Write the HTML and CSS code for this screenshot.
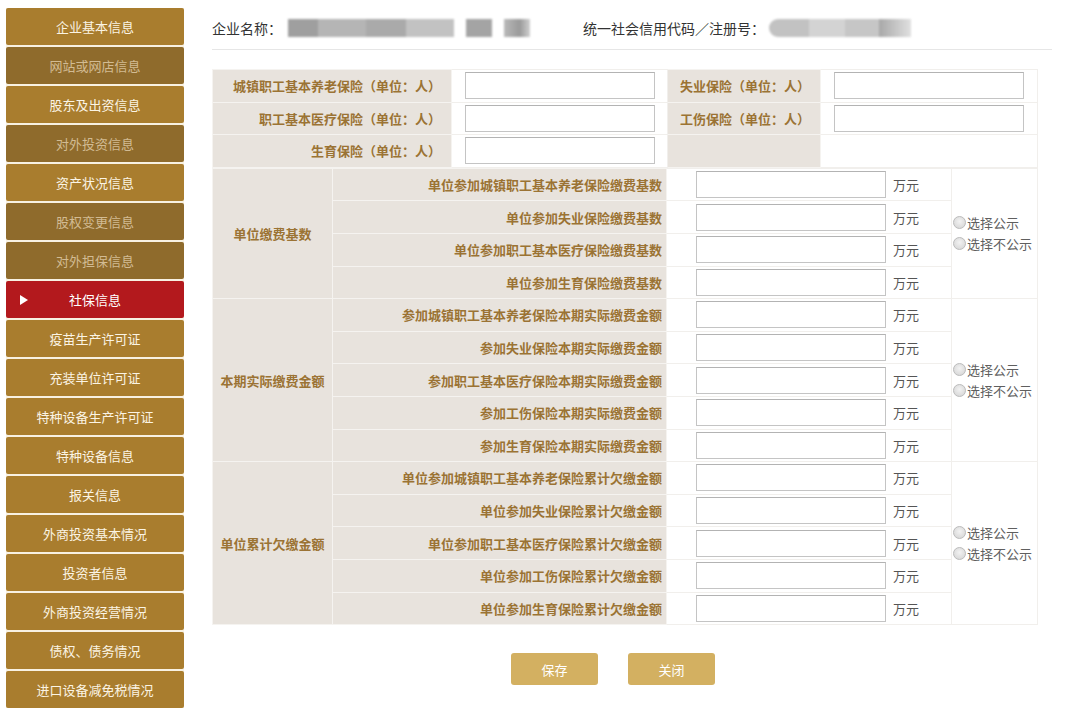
FILE: index.html
```html
<!DOCTYPE html>
<html lang="zh-CN">
<head>
<meta charset="utf-8">
<title>社保信息</title>
<link rel="stylesheet" href="styles.css">
</head>
<body>
<div class="page">
  <nav class="side">
    <a class="nav-item">企业基本信息</a>
    <a class="nav-item dim">网站或网店信息</a>
    <a class="nav-item">股东及出资信息</a>
    <a class="nav-item dim">对外投资信息</a>
    <a class="nav-item">资产状况信息</a>
    <a class="nav-item dim">股权变更信息</a>
    <a class="nav-item dim">对外担保信息</a>
    <a class="nav-item active"><span class="arrow"></span>社保信息</a>
    <a class="nav-item">疫苗生产许可证</a>
    <a class="nav-item">充装单位许可证</a>
    <a class="nav-item">特种设备生产许可证</a>
    <a class="nav-item">特种设备信息</a>
    <a class="nav-item">报关信息</a>
    <a class="nav-item">外商投资基本情况</a>
    <a class="nav-item">投资者信息</a>
    <a class="nav-item">外商投资经营情况</a>
    <a class="nav-item">债权、债务情况</a>
    <a class="nav-item">进口设备减免税情况</a>
  </nav>

  <main class="main">
    <header class="head">
      <span class="head-label">企业名称：</span>
      <span class="blur blur-name">
        <i class="b1"></i><i class="b2"></i><i class="b3"></i><i class="b4"></i><i class="b5"></i><i class="b6"></i><i class="b7"></i><i class="b8"></i>
      </span>
      <span class="head-label code-label">统一社会信用代码／注册号：</span>
      <span class="blur blur-code">
        <i class="c1"></i><i class="c2"></i><i class="c3"></i><i class="c4"></i>
      </span>
    </header>

    <table class="grid top">
      <colgroup><col class="t1"><col class="t2"><col class="t3"><col class="t4"></colgroup>
      <tr>
        <th>城镇职工基本养老保险（单位：人）</th>
        <td class="in"><input type="text"></td>
        <th>失业保险（单位：人）</th>
        <td class="in"><input type="text"></td>
      </tr>
      <tr>
        <th>职工基本医疗保险（单位：人）</th>
        <td class="in"><input type="text"></td>
        <th>工伤保险（单位：人）</th>
        <td class="in"><input type="text"></td>
      </tr>
      <tr>
        <th>生育保险（单位：人）</th>
        <td class="in"><input type="text"></td>
        <th></th>
        <td></td>
      </tr>
    </table>

    <table class="grid bottom">
      <colgroup><col class="g1"><col class="g2"><col class="g3"><col class="g4"></colgroup>
      <tr>
        <th class="group" rowspan="4">单位缴费基数</th>
        <th>单位参加城镇职工基本养老保险缴费基数</th>
        <td class="amt"><input type="text"><span class="unit">万元</span></td>
        <td class="pub" rowspan="4">
          <label class="radio"><span class="dot"></span>选择公示</label>
          <label class="radio"><span class="dot"></span>选择不公示</label>
        </td>
      </tr>
      <tr><th>单位参加失业保险缴费基数</th><td class="amt"><input type="text"><span class="unit">万元</span></td></tr>
      <tr><th>单位参加职工基本医疗保险缴费基数</th><td class="amt"><input type="text"><span class="unit">万元</span></td></tr>
      <tr><th>单位参加生育保险缴费基数</th><td class="amt"><input type="text"><span class="unit">万元</span></td></tr>

      <tr>
        <th class="group" rowspan="5">本期实际缴费金额</th>
        <th>参加城镇职工基本养老保险本期实际缴费金额</th>
        <td class="amt"><input type="text"><span class="unit">万元</span></td>
        <td class="pub" rowspan="5">
          <label class="radio"><span class="dot"></span>选择公示</label>
          <label class="radio"><span class="dot"></span>选择不公示</label>
        </td>
      </tr>
      <tr><th>参加失业保险本期实际缴费金额</th><td class="amt"><input type="text"><span class="unit">万元</span></td></tr>
      <tr><th>参加职工基本医疗保险本期实际缴费金额</th><td class="amt"><input type="text"><span class="unit">万元</span></td></tr>
      <tr><th>参加工伤保险本期实际缴费金额</th><td class="amt"><input type="text"><span class="unit">万元</span></td></tr>
      <tr><th>参加生育保险本期实际缴费金额</th><td class="amt"><input type="text"><span class="unit">万元</span></td></tr>

      <tr>
        <th class="group" rowspan="5">单位累计欠缴金额</th>
        <th>单位参加城镇职工基本养老保险累计欠缴金额</th>
        <td class="amt"><input type="text"><span class="unit">万元</span></td>
        <td class="pub" rowspan="5">
          <label class="radio"><span class="dot"></span>选择公示</label>
          <label class="radio"><span class="dot"></span>选择不公示</label>
        </td>
      </tr>
      <tr><th>单位参加失业保险累计欠缴金额</th><td class="amt"><input type="text"><span class="unit">万元</span></td></tr>
      <tr><th>单位参加职工基本医疗保险累计欠缴金额</th><td class="amt"><input type="text"><span class="unit">万元</span></td></tr>
      <tr><th>单位参加工伤保险累计欠缴金额</th><td class="amt"><input type="text"><span class="unit">万元</span></td></tr>
      <tr><th>单位参加生育保险累计欠缴金额</th><td class="amt"><input type="text"><span class="unit">万元</span></td></tr>
    </table>

    <div class="actions">
      <button class="btn" type="button">保存</button>
      <button class="btn" type="button">关闭</button>
    </div>
  </main>
</div>
</body>
</html>
```

FILE: styles.css
```css
* { box-sizing: border-box; }

html, body {
  margin: 0;
  padding: 0;
  background: #ffffff;
}

body {
  font-family: "Noto Sans CJK SC", "Noto Sans", "Liberation Sans", sans-serif;
  font-size: 13px;
  color: #333333;
  width: 1080px;
  height: 713px;
  overflow: hidden;
}

.page {
  display: flex;
  align-items: flex-start;
}

/* ---------- sidebar ---------- */
.side {
  width: 178px;
  margin: 8px 0 0 6px;
  display: flex;
  flex-direction: column;
  gap: 2px;
  background: #f8f1e2;
}

.nav-item {
  position: relative;
  display: flex;
  align-items: center;
  justify-content: center;
  height: 37px;
  background: #a97d2e;
  color: #fbf4e4;
  font-size: 13px;
  border-radius: 2px;
  text-decoration: none;
}

.nav-item.dim {
  background: #8f6b2c;
  color: #d2bb93;
}

.nav-item.active {
  background: #b3191d;
  color: #ffffff;
}

.arrow {
  position: absolute;
  left: 14px;
  top: 50%;
  margin-top: -5px;
  width: 0;
  height: 0;
  border-top: 5px solid transparent;
  border-bottom: 5px solid transparent;
  border-left: 8px solid #ffffff;
}

/* ---------- main ---------- */
.main {
  margin-left: 28px;
  width: 840px;
}

.head {
  display: flex;
  align-items: center;
  height: 50px;
  padding-top: 6px;
  border-bottom: 1px solid #e6e6e6;
}

.head-label {
  font-size: 14px;
  color: #333333;
}

.code-label {
  margin-left: 53px;
}

.blur {
  display: flex;
  height: 18px;
  filter: blur(0.8px);
}

.blur i { display: block; height: 100%; }

.blur-name { width: 242px; margin-left: 6px; }
.blur-name .b1 { width: 30px; background: #9f9f9f; }
.blur-name .b2 { width: 48px; background: #b5b5b5; }
.blur-name .b3 { width: 40px; background: #aaaaaa; }
.blur-name .b4 { width: 48px; background: #c2c2c2; }
.blur-name .b5 { width: 12px; background: #ffffff; }
.blur-name .b6 { width: 26px; background: #a4a4a4; }
.blur-name .b7 { width: 12px; background: #ffffff; }
.blur-name .b8 { width: 26px; background: linear-gradient(90deg, #b9b9b9, #9a9a9a 60%, #d0d0d0); }

.blur-code { width: 142px; margin-left: 4px; }
.blur-code .c1 { width: 40px; background: #c2c2c2; border-radius: 9px 0 0 9px; }
.blur-code .c2 { width: 36px; background: #d3d3d3; }
.blur-code .c3 { width: 34px; background: #c6c6c6; }
.blur-code .c4 { width: 32px; background: linear-gradient(90deg, #a8a8a8, #e0e0e0); }

/* ---------- tables ---------- */
.grid {
  width: 825px;
  table-layout: fixed;
  border-collapse: collapse;
}

.grid.top { margin-top: 19px; }

.grid th,
.grid td {
  height: 32.6px;
  padding: 0;
  border: 1px solid #f1efec;
}

.grid th {
  background: #e8e3dd;
  color: #9b7334;
  font-size: 13px;
  font-weight: bold;
  text-align: right;
  border-color: #f5f3f0;
  white-space: nowrap;
}

.grid td { background: #ffffff; }

.top th { padding-right: 10px; }
.top td.in { padding-left: 13px; }

col.t1 { width: 239px; }
col.t2 { width: 216px; }
col.t3 { width: 153px; }
col.t4 { width: 217px; }

col.g1 { width: 120px; }
col.g2 { width: 334px; }
col.g3 { width: 285px; }
col.g4 { width: 86px; }

.bottom th { padding-right: 4px; }
.bottom th.group {
  text-align: center;
  padding-right: 0;
}

.bottom td.amt {
  padding-left: 29px;
  white-space: nowrap;
}

input[type="text"] {
  width: 190px;
  height: 27px;
  border: 1px solid #c4c4c4;
  border-top-color: #b3b3b3;
  background: #ffffff;
  vertical-align: middle;
  font-size: 13px;
  padding: 0 4px;
  margin: 0;
}

.unit {
  display: inline-block;
  margin-left: 7px;
  font-size: 13px;
  color: #555555;
  vertical-align: middle;
}

td.pub {
  padding-left: 1px;
  vertical-align: middle;
}

.radio {
  display: flex;
  align-items: center;
  height: 21px;
  font-size: 13px;
  color: #5f5f5f;
  white-space: nowrap;
}

.dot {
  display: inline-block;
  width: 13px;
  height: 13px;
  margin-right: 1px;
  border-radius: 50%;
  border: 1px solid #bcbcbc;
  background: radial-gradient(circle at 50% 40%, #f2f2f2, #d2d2d2);
}

/* ---------- buttons ---------- */
.actions {
  display: flex;
  gap: 30px;
  padding-left: 299px;
  margin-top: 28px;
}

.btn {
  width: 87px;
  height: 32px;
  border: none;
  border-radius: 3px;
  background: #d3b061;
  color: #ffffff;
  font-family: "Noto Sans CJK SC", "Noto Sans", sans-serif;
  font-size: 13px;
  cursor: pointer;
}
```
